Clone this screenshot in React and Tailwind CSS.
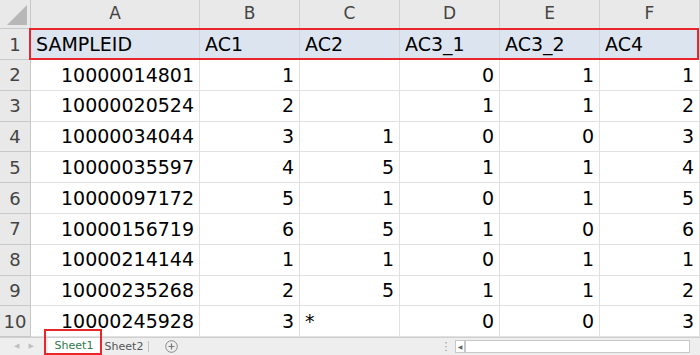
import React from "react";

const cols = ["A", "B", "C", "D", "E", "F"];
const widths = ["w-[169px]", "w-[100px]", "w-[100px]", "w-[100px]", "w-[100px]", "w-[100px]"];
const header = ["SAMPLEID", "AC1", "AC2", "AC3_1", "AC3_2", "AC4"];

const rows = [
  ["10000014801", "1", "", "0", "1", "1"],
  ["10000020524", "2", "", "1", "1", "2"],
  ["10000034044", "3", "1", "0", "0", "3"],
  ["10000035597", "4", "5", "1", "1", "4"],
  ["10000097172", "5", "1", "0", "1", "5"],
  ["10000156719", "6", "5", "1", "0", "6"],
  ["10000214144", "1", "1", "0", "1", "1"],
  ["10000235268", "2", "5", "1", "1", "2"],
  ["10000245928", "3", "*", "0", "0", "3"],
];

const RowHead = ({ n }) => (
  <div className="w-[31px] shrink-0 flex items-center justify-center bg-[#e9e9e9] border-r border-b border-[#c8c8c8] text-[18px] text-[#444]">
    {n}
  </div>
);

const App = () => {
  return (
    <div
      className="w-[700px] h-[355px] overflow-hidden bg-white flex flex-col"
      style={{ fontFamily: '"DejaVu Sans", Verdana, sans-serif' }}
    >
      {/* column headers */}
      <div className="flex h-[29px] shrink-0">
        <div className="w-[31px] shrink-0 bg-[#e9e9e9] border-r border-b border-[#c8c8c8] flex items-end justify-end p-[3px]">
          <svg width="20" height="20" viewBox="0 0 20 20">
            <polygon points="20,0 20,20 0,20" fill="#b7b7b7" />
          </svg>
        </div>
        {cols.map((c, i) => (
          <div
            key={c}
            className={`${widths[i]} shrink-0 bg-[#e9e9e9] border-r border-b border-[#d0d0d0] flex items-center justify-center text-[17px] text-[#444]`}
          >
            {c}
          </div>
        ))}
      </div>

      {/* row 1 */}
      <div className="flex h-[31px] shrink-0">
        <RowHead n={1} />
        <div className="relative flex">
          {header.map((h, i) => (
            <div
              key={h}
              className={`${widths[i]} shrink-0 bg-[#dce4ef] border-r border-b border-[#d4d4d4] flex items-center pl-[5px] text-[19px] text-black`}
            >
              {h}
            </div>
          ))}
          <div className="absolute -left-[2px] -top-[1px] right-[1px] bottom-[0px] border-2 border-[#e8262b] pointer-events-none" />
        </div>
      </div>

      {rows.map((r, ri) => (
        <div key={ri} className="flex h-[30.8px] shrink-0">
          <RowHead n={ri + 2} />
          {r.map((v, ci) => (
            <div
              key={ci}
              className={`${widths[ci]} shrink-0 border-r border-b border-[#e1e1e1] flex items-center text-[19px] text-black ${
                v === "*" ? "justify-start pl-[5px]" : "justify-end pr-[5px]"
              }`}
            >
              {v}
            </div>
          ))}
        </div>
      ))}

      {/* sheet tabs */}
      <div className="flex-1 min-h-0 flex items-stretch bg-[#eeeeee] border-t border-[#cfcfcf] text-[11px] leading-none">
        <div className="w-[48px] shrink-0 flex items-center justify-center gap-[9px] text-[#c0c0c0] text-[7px]">
          <span>◀</span>
          <span>▶</span>
        </div>
        <div className="relative w-[52px] shrink-0 bg-white border-b-2 border-[#2f8a4e] flex items-center justify-center text-[#2f7a48]">
          Sheet1
          <div className="absolute -left-[4px] -right-[2px] -top-[9px] -bottom-[2px] border-2 border-[#e8262b] pointer-events-none" />
        </div>
        <div className="w-[48px] shrink-0 flex items-center justify-center text-[#555]">
          Sheet2
        </div>
        <div className="w-px my-[3px] bg-[#c4c4c4]" />
        <div className="w-[45px] flex items-center justify-center">
          <svg width="13" height="13" viewBox="0 0 13 13">
            <circle cx="6.5" cy="6.5" r="5.8" fill="none" stroke="#888" strokeWidth="1" />
            <path d="M6.5 3.5v6M3.5 6.5h6" stroke="#777" strokeWidth="1.2" />
          </svg>
        </div>
        <div className="flex-1" />
        <div className="w-[18px] flex items-center justify-center text-[#999] text-[11px]">⋮</div>
        <div className="flex items-center pr-[10px] py-[2px]">
          <div className="w-[10px] h-[13px] border border-[#c8c8c8] bg-white flex items-center justify-center text-[6px] text-[#666]">
            ◀
          </div>
          <div className="w-[225px] h-[13px] border border-[#c8c8c8] bg-white" />
        </div>
      </div>
    </div>
  );
};

export default App;
